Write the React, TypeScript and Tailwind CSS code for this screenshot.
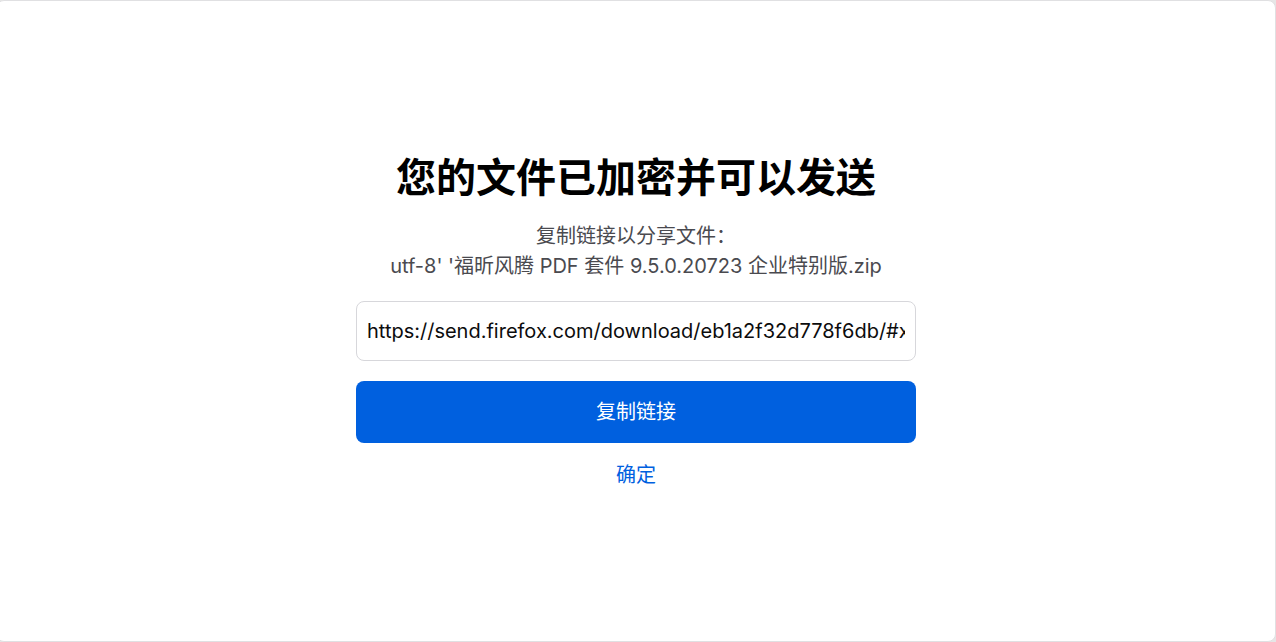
import React from "react";

const fontStack = {
  fontFamily: "Inter, 'Noto Sans CJK SC', sans-serif",
};

export default function App() {
  const link = "https://send.firefox.com/download/eb1a2f32d778f6db/#xT0bRk1dJzHqXyL3mN8aVw";

  return (
    <div className="w-[1276px] h-[642px] bg-[#e6e6e6] overflow-hidden" style={fontStack}>
      <div className="-ml-[4px] w-[1280px] h-full pt-[2px] bg-white border border-[#e0e0e2] rounded-lg flex flex-col items-center justify-center">
        <h1 className="text-[40px] leading-[48px] font-bold text-black">
          您的文件已加密并可以发送
        </h1>

        <p className="mt-[19px] text-[20px] leading-[30px] text-[#4a4a4f] text-center">
          复制链接以分享文件：
          <br />
          utf-8' '福昕风腾 PDF 套件 9.5.0.20723 企业特别版.zip
        </p>

        <input
          readOnly
          value={link}
          className="mt-[20px] w-[560px] h-[60px] px-[10px] border border-[#d7d7db] rounded-lg text-[20px] text-[#0c0c0d] bg-white outline-none"
          style={fontStack}
        />

        <button className="mt-[20px] w-[560px] h-[62px] rounded-lg bg-[#0060df] text-white text-[20px]">
          复制链接
        </button>

        <a className="mt-[17px] text-[20px] leading-[30px] text-[#0060df] cursor-pointer">
          确定
        </a>
      </div>
    </div>
  );
}
